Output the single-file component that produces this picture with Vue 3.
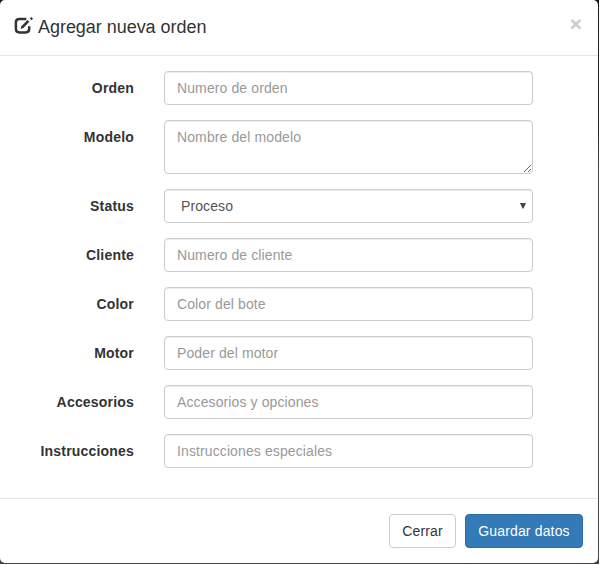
<script setup>
import { ref } from 'vue'

const status = ref('Proceso')
const fields = [
  { id: 'orden', label: 'Orden', placeholder: 'Numero de orden', type: 'text' },
  { id: 'modelo', label: 'Modelo', placeholder: 'Nombre del modelo', type: 'area' },
  { id: 'status', label: 'Status', type: 'select' },
  { id: 'cliente', label: 'Cliente', placeholder: 'Numero de cliente', type: 'text' },
  { id: 'color', label: 'Color', placeholder: 'Color del bote', type: 'text' },
  { id: 'motor', label: 'Motor', placeholder: 'Poder del motor', type: 'text' },
  { id: 'accesorios', label: 'Accesorios', placeholder: 'Accesorios y opciones', type: 'text' },
  { id: 'instrucciones', label: 'Instrucciones', placeholder: 'Instrucciones especiales', type: 'text' },
]
</script>

<template>
  <div class="backdrop">
    <form class="modal" @submit.prevent>
      <header class="head">
        <svg class="edit" width="19" height="18" viewBox="0 0 19 18">
          <path d="M12.3 1.9H5.4Q1.9 1.9 1.9 5.2V12.1Q1.9 15.4 5.4 15.4H11.7Q15.2 15.4 15.2 12.1V9.2" fill="none" stroke="#333" stroke-width="2.5" />
          <path d="M13.5 3L15.3 4.8L9.4 11.1L6.5 12L7.4 9.2Z" fill="#333" />
          <path d="M17.3 0L19 1.7L17.6 3.3L15.8 1.5Z" fill="#333" />
        </svg>
        <h4 class="title">Agregar nueva orden</h4>
        <button class="close" type="button" aria-label="Close">×</button>
      </header>
      <div class="body">
        <div v-for="f in fields" :key="f.id" class="row">
          <label :for="f.id">{{ f.label }}</label>
          <div class="holder">
            <textarea v-if="f.type === 'area'" :id="f.id" class="control area" :placeholder="f.placeholder" />
            <select v-else-if="f.type === 'select'" :id="f.id" v-model="status" class="control select">
              <option>Proceso</option>
            </select>
            <input v-else :id="f.id" class="control" type="text" :placeholder="f.placeholder">
            <svg v-if="f.type === 'area'" class="grip" width="7" height="7" viewBox="0 0 7 7">
              <path d="M0 7L7 0M4 7L7 4" stroke="#555" stroke-width=".9" />
            </svg>
            <svg v-if="f.type === 'select'" class="arrow" width="6" height="6" viewBox="0 0 6 6">
              <path d="M0 0H6L3.5 5.5H2.5Z" fill="#444" />
            </svg>
          </div>
        </div>
      </div>
      <footer class="foot">
        <button class="btn" type="button">Cerrar</button>
        <button class="btn primary" type="submit">Guardar datos</button>
      </footer>
    </form>
  </div>
</template>

<style>
body { background: #fff; overflow: hidden; }
</style>

<style scoped>
* { box-sizing: border-box; }
.backdrop {
  width: 599px;
  height: 564px;
  padding-right: 1px;
  background: linear-gradient(#181818 0, #202528 130px, #48484a 170px, #444446 100%);
  font: 14px/20px "Liberation Sans", Arial, sans-serif;
  color: #333;
}
.modal { height: 563px; background: #fff; border-radius: 5px; overflow: hidden; }
.head {
  display: flex;
  height: 56px;
  padding: 17px 16px 0 14px;
  border-bottom: 1px solid #e5e5e5;
}
.edit { flex: none; margin-right: 5px; }
.title { flex: 1; margin: -3px 0 0; font-size: 18px; line-height: 26px; font-weight: 400; letter-spacing: -.04px; }
.close {
  align-self: flex-start;
  margin-top: -4px;
  padding: 0;
  border: 0;
  background: none;
  color: #ccc;
  font: bold 21px/21px "Liberation Sans", Arial, sans-serif;
}
.body { height: 442px; padding: 15px 65px 0 0; }
.row { display: flex; margin-bottom: 15px; }
label {
  width: 134px;
  margin-right: 30px;
  padding-top: 7px;
  text-align: right;
  font-weight: 700;
  letter-spacing: .19px;
}
.holder { position: relative; width: 369px; display: flex; }
.control {
  display: block;
  width: 369px;
  height: 34px;
  margin: 0;
  padding: 6px 12px;
  border: 1px solid #ccc;
  border-radius: 4px;
  background: #fff;
  box-shadow: inset 0 1px 1px rgba(0, 0, 0, .075);
  color: #555;
  font: inherit;
  letter-spacing: .11px;
  outline: 0;
}
.control::placeholder { color: #999; opacity: 1; }
.area { height: 54px; resize: none; overflow: hidden; }
.select { appearance: none; padding-left: 16px; }
.grip { position: absolute; right: 2px; bottom: 2px; }
.arrow { position: absolute; right: 7px; top: 14px; pointer-events: none; }
.foot {
  display: flex;
  justify-content: flex-end;
  gap: 9px;
  height: 65px;
  padding: 15px 15px 0;
  border-top: 1px solid #e5e5e5;
}
.btn {
  width: 67px;
  height: 34px;
  padding: 0;
  border: 1px solid #ccc;
  border-radius: 4px;
  background: #fff;
  color: #333;
  font: inherit;
  letter-spacing: .16px;
}
.primary { width: 118px; border-color: #2e6da4; background: #337ab7; color: #fff; }
</style>
